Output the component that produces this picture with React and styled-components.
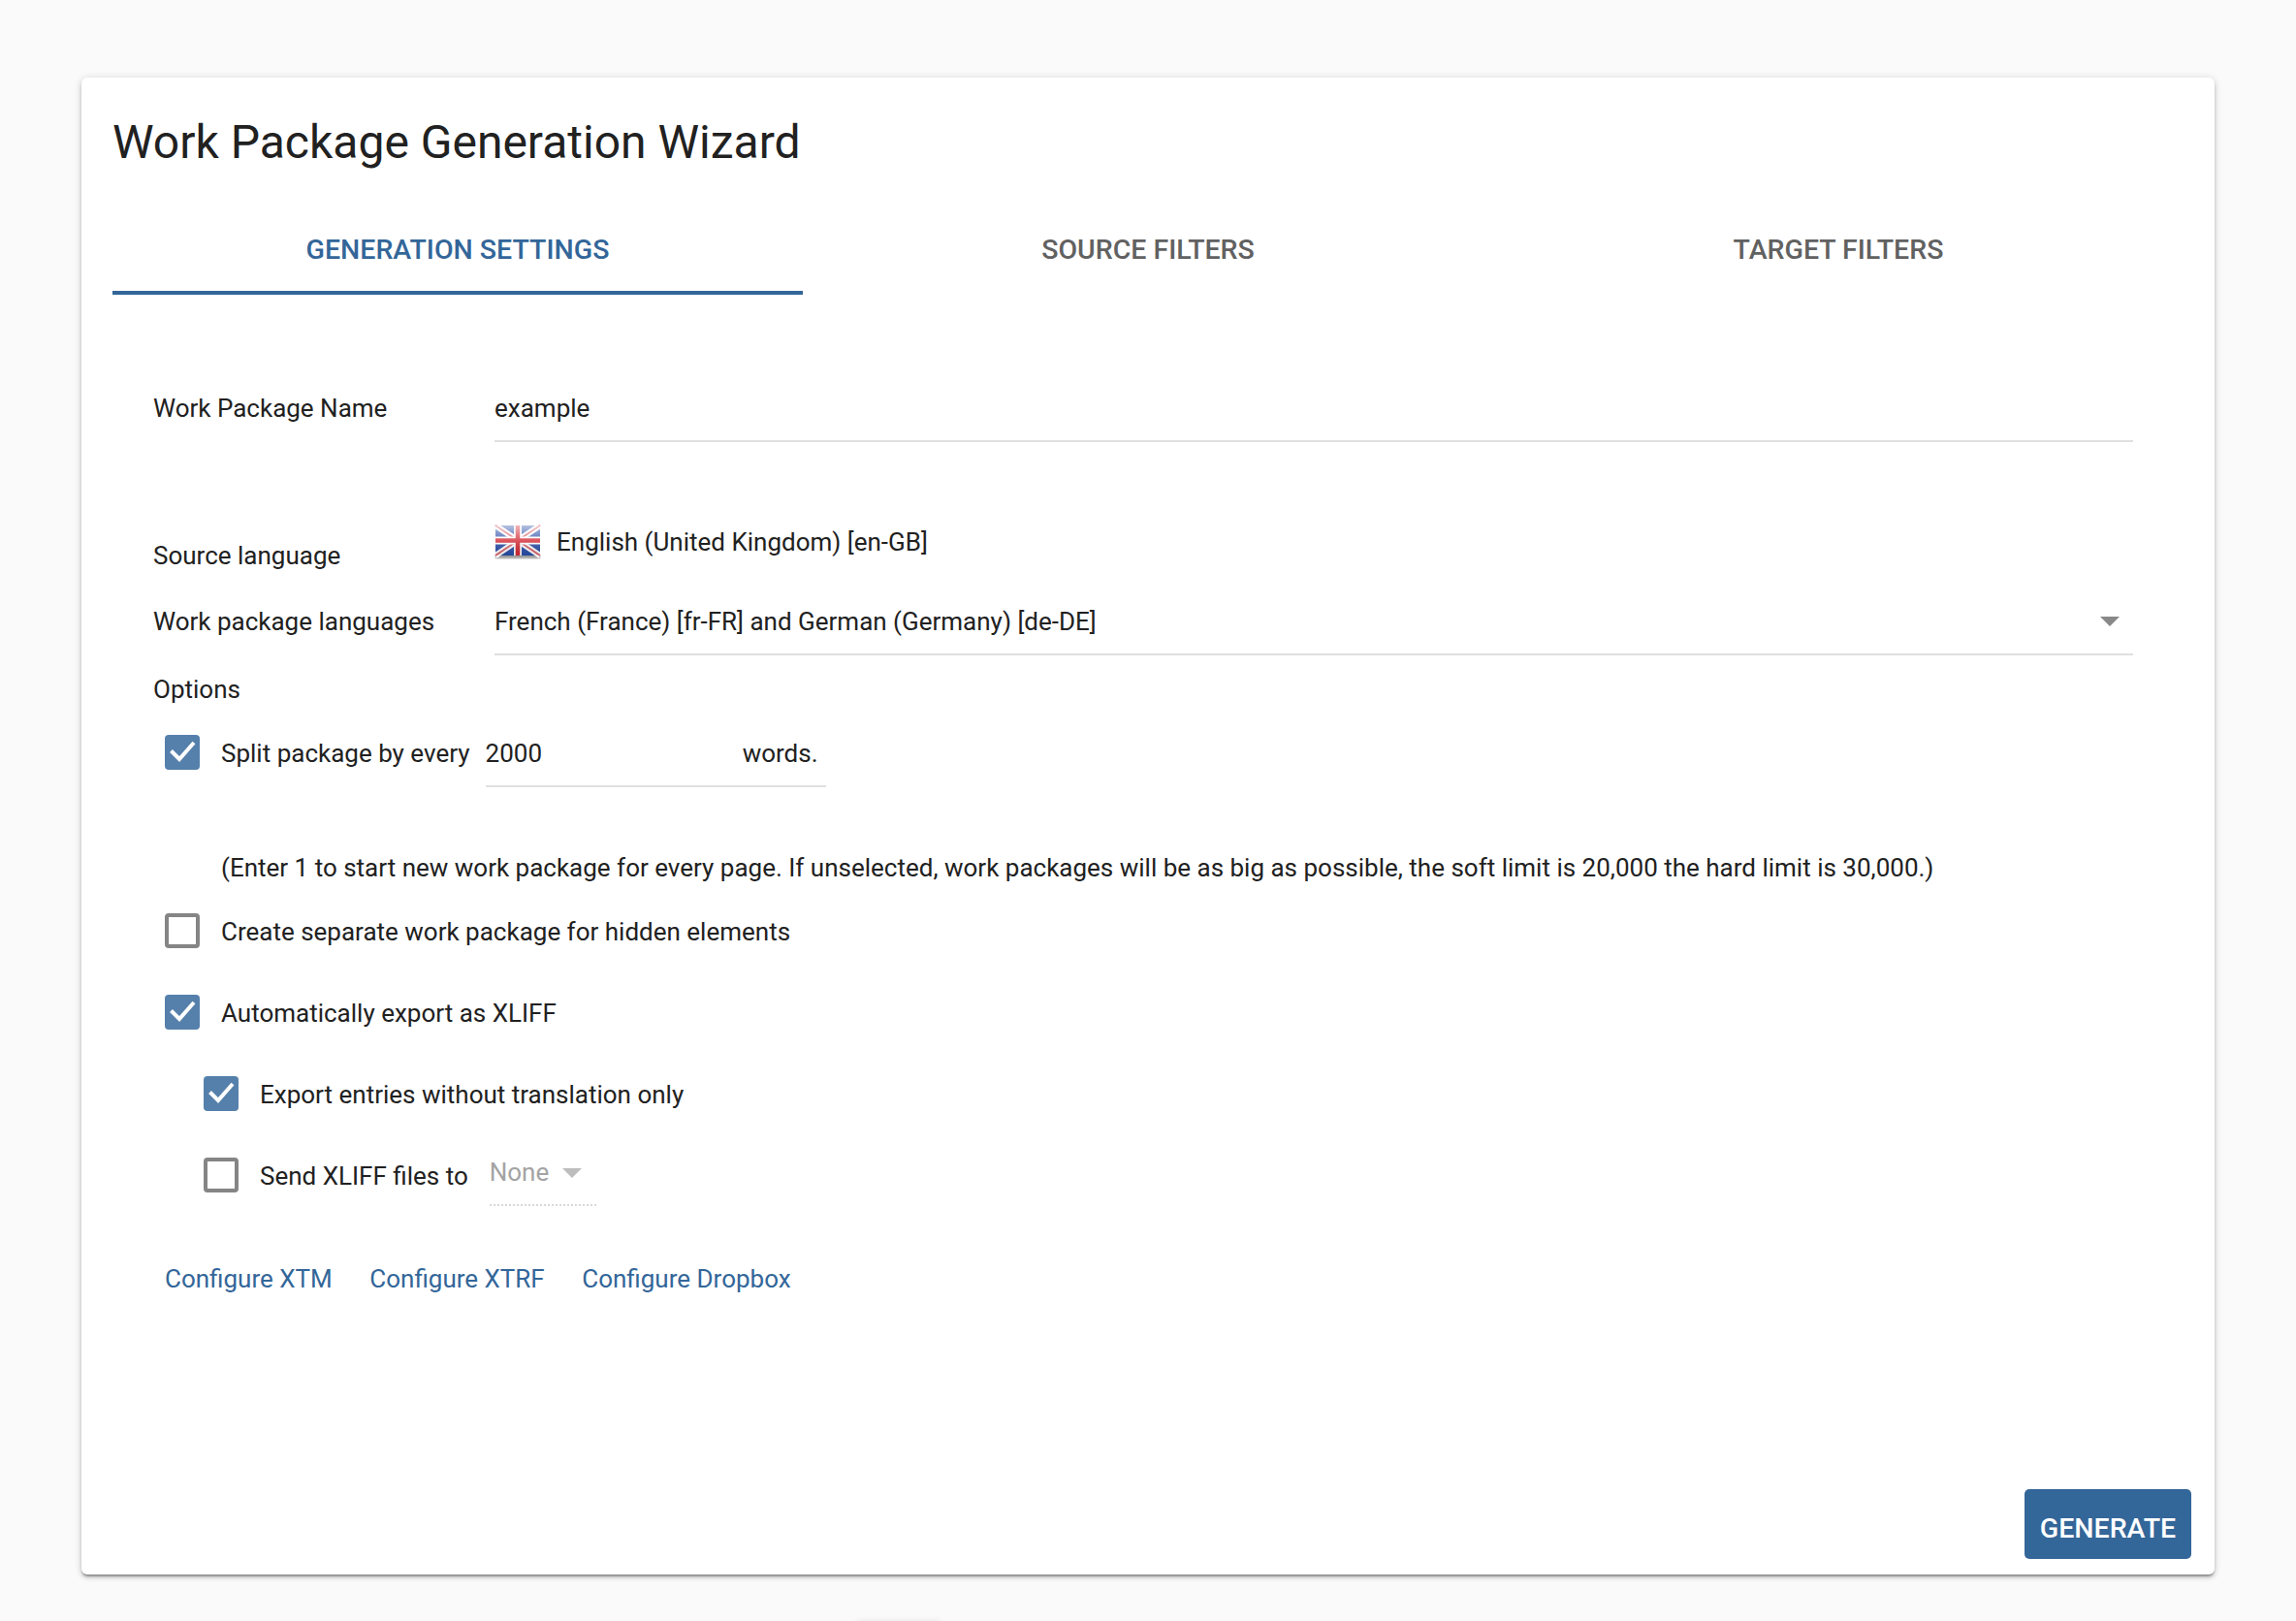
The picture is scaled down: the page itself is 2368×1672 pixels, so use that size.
import React from 'react'
import styled, { createGlobalStyle } from 'styled-components'

const Global = createGlobalStyle`
  html, body { margin: 0; padding: 0; background: #fafafa; }
  body { font-family: Roboto, "Liberation Sans", sans-serif; color: rgba(0,0,0,.87); }
  * { box-sizing: border-box; }
`
const Page = styled.div`
  position: relative;
  width: 2368px;
  height: 1672px;
  padding: 80px 84px 48px;
  overflow: hidden;
`
const Card = styled.div`
  height: 1544px;
  background: #fff;
  border-radius: 6px;
  padding: 0 24px 16px 32px;
  display: flex;
  flex-direction: column;
  box-shadow: 0 3px 2px -1px rgba(0,0,0,.28), 0 3px 4px 0 rgba(0,0,0,.16), 0 1px 9px 0 rgba(0,0,0,.14);
`
const OffscreenEdge = styled.div`
  position: absolute;
  left: 884px;
  top: 1673px;
  width: 86px;
  height: 10px;
  box-shadow: 0 0 6px rgba(0,0,0,.12);
`
const Title = styled.h1`
  margin: 0;
  height: 130px;
  padding-top: 2px;
  display: flex;
  align-items: center;
  font-size: 48px;
  font-weight: 400;
  color: #212121;
`
const Tabs = styled.div`
  display: flex;
  margin-right: 8px;
`
const Tab = styled.div`
  flex: 1;
  height: 94px;
  padding-top: 4px;
  display: flex;
  align-items: center;
  justify-content: center;
  font-size: 28.5px;
  font-weight: 500;
  color: ${p => (p.$active ? '#336699' : '#616161')};
  border-bottom: 4px solid ${p => (p.$active ? '#336699' : 'transparent')};
`
const Form = styled.div`
  padding: 85px 60px 0 42px;
  font-size: 26px;
  line-height: 28px;
  color: #212121;
`
const Row = styled.div`
  display: flex;
  margin-top: ${p => p.$top || 0}px;
`
const Label = styled.div`
  width: 352px;
  flex: none;
  padding-top: ${p => p.$top || 0}px;
`
const Field = styled.div`
  flex: 1;
  height: 67px;
  padding: 0 14px 1px 0;
  display: flex;
  align-items: center;
  justify-content: space-between;
  border-bottom: 2px solid #e0e0e0;
`
const Arrow = styled.span`
  width: 0;
  height: 0;
  border-left: 10px solid transparent;
  border-right: 10px solid transparent;
  border-top: 10px solid ${p => p.$light ? '#bdbdbd' : '#888'};
`
const SourceValue = styled.div`
  height: 40px;
  display: flex;
  align-items: center;
  gap: 16px;
  padding-bottom: 2px;
`
const FlagBox = styled.svg`
  width: 48px;
  height: 36px;
  flex: none;
`
const Section = styled.div`
  margin-top: 21px;
`
const OptionRow = styled.div`
  display: flex;
  align-items: ${p => (p.$start ? 'flex-start' : 'center')};
  margin-top: ${p => p.$top || 0}px;
  padding-left: ${p => p.$indent || 12}px;
`
const Box = styled.span`
  width: 36px;
  height: 36px;
  flex: none;
  margin-right: 22px;
  margin-top: ${p => p.$top || 0}px;
  border-radius: 4px;
  display: flex;
  align-items: center;
  justify-content: center;
  background: ${p => (p.$on ? '#5580ab' : '#fff')};
  border: ${p => (p.$on ? 'none' : '4px solid #858585')};
`
const OptionText = styled.span`
  padding-top: ${p => p.$top ?? 2}px;
`
const WordsField = styled.div`
  width: 351px;
  height: 70px;
  margin-left: 16px;
  padding: 21px 8px 0 0;
  display: flex;
  justify-content: space-between;
  border-bottom: 2px solid #e0e0e0;
`
const Note = styled.div`
  margin-top: 69px;
  padding-left: 70px;
`
const XliffSelect = styled.div`
  width: 110px;
  height: 50px;
  margin-left: 22px;
  padding: 1px 0 0 0;
  display: flex;
  align-items: flex-start;
  color: #a3a3a3;
  border-bottom: 2px dotted #d8d8d8;
`
const SelectArrow = styled(Arrow)`
  margin: 10px 0 0 14px;
`
const Links = styled.div`
  display: flex;
  gap: 38.5px;
  margin-top: 61px;
  padding-left: 12px;
`
const LinkText = styled.a`
  color: #336699;
  text-decoration: none;
`
const Footer = styled.div`
  margin-top: auto;
  display: flex;
  justify-content: flex-end;
`
const GenerateButton = styled.button`
  width: 172px;
  height: 72px;
  padding: 8px 0 0;
  border: none;
  border-radius: 5px;
  background: #336699;
  color: #fff;
  font-family: inherit;
  font-size: 28.5px;
  font-weight: 500;
`

const Check = () => (
  <svg width="30" height="30" viewBox="0 0 30 30" fill="none">
    <path d="M3.5 13.5L12 22L27 5" stroke="#fff" strokeWidth="4" />
  </svg>
)

const Flag = () => (
  <FlagBox viewBox="0 0 48 36">
    <defs>
      <linearGradient id="shade" x1="0" y1="0" x2="0" y2="1">
        <stop offset="0" stopColor="#fff" stopOpacity=".65" />
        <stop offset=".5" stopColor="#fff" stopOpacity=".2" />
        <stop offset="1" stopColor="#000" stopOpacity=".08" />
      </linearGradient>
      <filter id="soft"><feGaussianBlur stdDeviation=".6" /></filter>
      <filter id="drop"><feGaussianBlur stdDeviation="1.2" /></filter>
    </defs>
    <rect x="1" y="30" width="46" height="5" fill="#999" filter="url(#drop)" />
    <g filter="url(#soft)">
      <rect x="1" y="1" width="46" height="31" fill="#2a4ea8" />
      <path d="M1 1L47 32M47 1L1 32" stroke="#fff" strokeWidth="6" />
      <path d="M1 1L47 32M47 1L1 32" stroke="#d8636e" strokeWidth="2" />
      <path d="M24 1V32M1 16.5H47" stroke="#fff" strokeWidth="8" />
      <path d="M24 1V32M1 16.5H47" stroke="#d42a36" strokeWidth="4.5" />
      <rect x="1" y="1" width="46" height="31" fill="url(#shade)" />
    </g>
  </FlagBox>
)

const App = () => {
  return (
    <Page>
      <Global />
      <Card>
        <Title>Work Package Generation Wizard</Title>
        <Tabs>
          <Tab $active>GENERATION SETTINGS</Tab>
          <Tab>SOURCE FILTERS</Tab>
          <Tab>TARGET FILTERS</Tab>
        </Tabs>
        <Form>
          <Row>
            <Label $top={18}>Work Package Name</Label>
            <Field>example</Field>
          </Row>
          <Row $top={84}>
            <Label $top={19}>Source language</Label>
            <SourceValue>
              <Flag />
              English (United Kingdom) [en-GB]
            </SourceValue>
          </Row>
          <Row $top={22}>
            <Label $top={18}>Work package languages</Label>
            <Field>
              French (France) [fr-FR] and German (Germany) [de-DE]
              <Arrow />
            </Field>
          </Row>
          <Section>Options</Section>
          <OptionRow $start $top={17}>
            <Box $on $top={16}><Check /></Box>
            <OptionText $top={21}>Split package by every</OptionText>
            <WordsField>
              <span>2000</span>
              <span>words.</span>
            </WordsField>
          </OptionRow>
          <Note>(Enter 1 to start new work package for every page. If unselected, work packages will be as big as possible, the soft limit is 20,000 the hard limit is 30,000.)</Note>
          <OptionRow $top={33}>
            <Box />
            <OptionText>Create separate work package for hidden elements</OptionText>
          </OptionRow>
          <OptionRow $top={48}>
            <Box $on><Check /></Box>
            <OptionText>Automatically export as XLIFF</OptionText>
          </OptionRow>
          <OptionRow $top={48} $indent={52}>
            <Box $on><Check /></Box>
            <OptionText>Export entries without translation only</OptionText>
          </OptionRow>
          <OptionRow $start $top={48} $indent={52}>
            <Box />
            <OptionText $top={5}>Send XLIFF files to</OptionText>
            <XliffSelect>
              None
              <SelectArrow $light />
            </XliffSelect>
          </OptionRow>
          <Links>
            <LinkText>Configure XTM</LinkText>
            <LinkText>Configure XTRF</LinkText>
            <LinkText>Configure Dropbox</LinkText>
          </Links>
        </Form>
        <Footer>
          <GenerateButton>GENERATE</GenerateButton>
        </Footer>
      </Card>
      <OffscreenEdge />
    </Page>
  )
}

export default App
